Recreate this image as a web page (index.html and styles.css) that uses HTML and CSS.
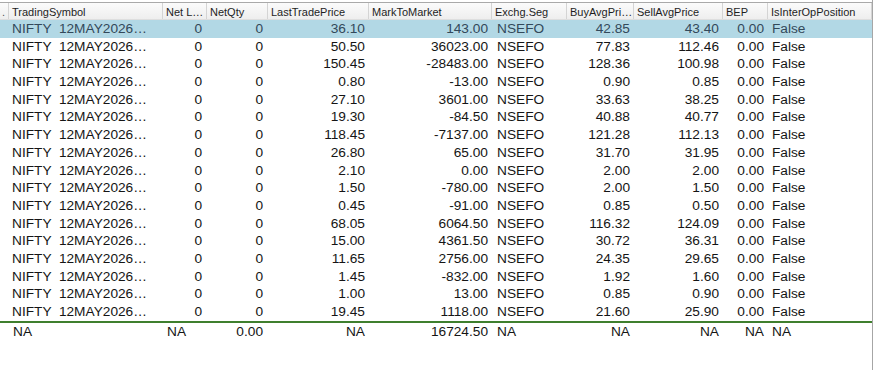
FILE: index.html
```html
<!DOCTYPE html>
<html>
<head>
<meta charset="utf-8">
<link rel="stylesheet" href="styles.css">
</head>
<body>
<div class="grid-view">
  <div class="row header">
    <div class="cell stub">.</div>
    <div class="cell">TradingSymbol</div>
    <div class="cell">Net L…</div>
    <div class="cell">NetQty</div>
    <div class="cell">LastTradePrice</div>
    <div class="cell">MarkToMarket</div>
    <div class="cell">Exchg.Seg</div>
    <div class="cell">BuyAvgPri…</div>
    <div class="cell">SellAvgPrice</div>
    <div class="cell">BEP</div>
    <div class="cell">IsInterOpPosition</div>
  </div>
  <div class="body" id="rows"></div>
  <div class="row footer">
    <div class="cell"></div>
    <div class="cell">NA</div>
    <div class="cell">NA</div>
    <div class="cell num">0.00</div>
    <div class="cell num">NA</div>
    <div class="cell num">16724.50</div>
    <div class="cell seg">NA</div>
    <div class="cell num">NA</div>
    <div class="cell num">NA</div>
    <div class="cell num">NA</div>
    <div class="cell">NA</div>
  </div>
</div>
<script src="app.js"></script>
</body>
</html>
```
FILE: app.js
```js
const data = [
  ["36.10","143.00","42.85","43.40"],
  ["50.50","36023.00","77.83","112.46"],
  ["150.45","-28483.00","128.36","100.98"],
  ["0.80","-13.00","0.90","0.85"],
  ["27.10","3601.00","33.63","38.25"],
  ["19.30","-84.50","40.88","40.77"],
  ["118.45","-7137.00","121.28","112.13"],
  ["26.80","65.00","31.70","31.95"],
  ["2.10","0.00","2.00","2.00"],
  ["1.50","-780.00","2.00","1.50"],
  ["0.45","-91.00","0.85","0.50"],
  ["68.05","6064.50","116.32","124.09"],
  ["15.00","4361.50","30.72","36.31"],
  ["11.65","2756.00","24.35","29.65"],
  ["1.45","-832.00","1.92","1.60"],
  ["1.00","13.00","0.85","0.90"],
  ["19.45","1118.00","21.60","25.90"]
];
const host = document.getElementById("rows");
data.forEach((d, i) => {
  const row = document.createElement("div");
  row.className = "row data" + (i === 0 ? " selected" : "");
  const cells = [
    ["", ""],
    ["sym", "NIFTY  12MAY2026…"],
    ["num", "0"],
    ["num", "0"],
    ["num", d[0]],
    ["num", d[1]],
    ["seg", "NSEFO"],
    ["num", d[2]],
    ["num", d[3]],
    ["num", "0.00"],
    ["", "False"]
  ];
  cells.forEach(([cls, txt]) => {
    const c = document.createElement("div");
    c.className = "cell " + cls;
    c.textContent = txt;
    row.appendChild(c);
  });
  host.appendChild(row);
});
```
FILE: styles.css
```css
html, body {
  margin: 0;
  padding: 0;
  background: #ffffff;
}

body {
  width: 875px;
  height: 370px;
  overflow: hidden;
  font-family: "Liberation Sans", Arial, sans-serif;
}

.grid-view {
  width: 873px;
  height: 370px;
  padding-top: 2px;
  box-sizing: border-box;
  border-right: 1px solid #a6a6a6;
  background: #ffffff;
}

.row {
  display: grid;
  grid-template-columns: 9px 154px 44px 61px 101px 123px 75px 67px 89px 45px 104px;
}

.cell {
  overflow: hidden;
  white-space: pre;
  padding: 0 4px;
  box-sizing: border-box;
}

.header {
  height: 18px;
  border-top: 1px solid #a9a9a9;
  border-bottom: 1px solid #dedede;
  background: linear-gradient(#fbfbfb, #eeeeee);
  box-sizing: border-box;
  font-size: 11px;
  color: #1e1e1e;
}

.header .cell {
  line-height: 17px;
  padding: 1px 3px 0 3px;
  border-right: 1px solid #d4d4d4;
}

.header .stub {
  padding: 1px 3px 0 0;
  text-align: right;
  color: #555;
}

.data {
  height: 17.7px;
  line-height: 17.7px;
  font-size: 13.7px;
  color: #151515;
}

.data.selected {
  background: #b2d8e5;
  color: #33495a;
}

.cell.sym {
  padding-left: 3px;
}

.cell.num {
  text-align: right;
  padding-right: 4px;
}

.cell.seg {
  padding-left: 5px;
}

.data .cell:nth-child(3),
.data .cell:nth-child(4) {
  padding-right: 5px;
}

.footer {
  border-top: 2px solid #3f7f2e;
  height: 20px;
  line-height: 18px;
  font-size: 13.7px;
  color: #151515;
  box-sizing: border-box;
}

.footer .cell:nth-child(4) {
  padding-right: 5px;
}
```
